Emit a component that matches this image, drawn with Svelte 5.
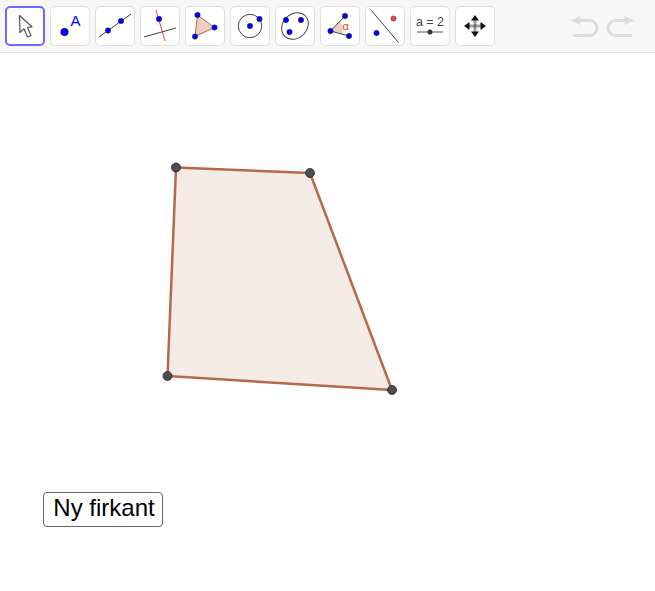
<script>
  const blue = '#0000ff';
</script>

<div class="applet">
  <div class="toolbar">
    <div class="tools">
      <button class="tool active" aria-label="Flytt">
        <svg viewBox="0 0 40 40"><path d="M14.5 9.5 L15 26.5 L19 22.8 L22.5 31 L26 29.5 L22.5 21.5 L27 20.8 Z" fill="#fff" stroke="#555" stroke-width="1.2" stroke-linejoin="round"/></svg>
      </button>
      <button class="tool" aria-label="Punkt">
        <svg viewBox="0 0 40 40"><circle cx="14.5" cy="26" r="3.8" fill={blue} stroke="#111" stroke-width=".6"/><text x="25.5" y="19.5" class="a">A</text></svg>
      </button>
      <button class="tool" aria-label="Linje">
        <svg viewBox="0 0 40 40"><path d="M4 31 L36 8" stroke="#444" stroke-width="1"/><circle cx="13" cy="24.5" r="2.7" class="p"/><circle cx="26" cy="15" r="2.7" class="p"/></svg>
      </button>
      <button class="tool" aria-label="Normal">
        <svg viewBox="0 0 40 40"><path d="M16 4 L25 35" stroke="#f04040" stroke-width="1"/><path d="M4 31 L36 22" stroke="#444" stroke-width="1"/><circle cx="19" cy="13" r="2.7" class="p"/></svg>
      </button>
      <button class="tool" aria-label="Mangekant">
        <svg viewBox="0 0 40 40"><path d="M12.5 9 L29.5 21.5 L10 30.5 Z" fill="#eccfc4" stroke="#b5694a" stroke-width="1"/><circle cx="12.5" cy="9" r="2.7" class="p"/><circle cx="29.5" cy="21.5" r="2.7" class="p"/><circle cx="10" cy="30.5" r="2.7" class="p"/></svg>
      </button>
      <button class="tool" aria-label="Sirkel">
        <svg viewBox="0 0 40 40"><circle cx="20" cy="20" r="11.7" fill="none" stroke="#444" stroke-width="1"/><circle cx="20" cy="20" r="2.7" class="p"/><circle cx="29.5" cy="13" r="2.7" class="p"/></svg>
      </button>
      <button class="tool" aria-label="Ellipse">
        <svg viewBox="0 0 40 40"><ellipse cx="20" cy="20" rx="14.5" ry="12" transform="rotate(-45 20 20)" fill="none" stroke="#444" stroke-width="1"/><circle cx="11" cy="14" r="2.7" class="p"/><circle cx="26" cy="14" r="2.7" class="p"/><circle cx="14.5" cy="26" r="2.7" class="p"/></svg>
      </button>
      <button class="tool" aria-label="Vinkel">
        <svg viewBox="0 0 40 40"><path d="M10.5 25 L19.5 15.7 A 13 13 0 0 1 23 28.4 Z" fill="#eccfc4"/><path d="M25 10 L10.5 25 L29 30" fill="none" stroke="#444" stroke-width="1"/><circle cx="25" cy="10" r="2.7" class="p"/><circle cx="10.5" cy="25" r="2.7" class="p"/><circle cx="29" cy="30" r="2.7" class="p"/><text x="22.5" y="23.5" class="alpha">α</text></svg>
      </button>
      <button class="tool" aria-label="Speiling">
        <svg viewBox="0 0 40 40"><path d="M6 4 L33.5 36.5" stroke="#444" stroke-width="1"/><circle cx="11.5" cy="27" r="2.7" class="p"/><circle cx="28.5" cy="12.5" r="2.6" fill="#f04040" stroke="#333" stroke-width=".5"/></svg>
      </button>
      <button class="tool" aria-label="Glider">
        <svg viewBox="0 0 40 40"><text x="20" y="19.5" class="slider">a = 2</text><path d="M7 26 H33" stroke="#555" stroke-width="1"/><circle cx="20" cy="26" r="2.5" fill="#333"/></svg>
      </button>
      <button class="tool" aria-label="Flytt tegneflate">
        <svg viewBox="0 0 40 40"><path d="M19.2 12 V28 M20.8 12 V28 M12 19.2 H28 M12 20.8 H28" stroke="#333" stroke-width=".7"/><path d="M20 9 L24 14.5 H16 Z M20 31 L24 25.5 H16 Z M9 20 L14.5 16 V24 Z M31 20 L25.5 16 V24 Z" fill="#111"/></svg>
      </button>
    </div>
    <div class="history">
      <svg class="hist" viewBox="0 0 30 24" aria-label="Angre"><path d="M0.5 4.5 L10.5 0 V9 Z" fill="#dcdcdc"/><path d="M9 4.5 H19.5 A 7.5 7.5 0 0 1 19.5 19.5 H3" fill="none" stroke="#dcdcdc" stroke-width="3"/></svg>
      <svg class="hist" viewBox="0 0 30 24" aria-label="Gjenta"><path d="M29.5 4.5 L19.5 0 V9 Z" fill="#dcdcdc"/><path d="M21 4.5 H10.5 A 7.5 7.5 0 0 0 10.5 19.5 H27" fill="none" stroke="#dcdcdc" stroke-width="3"/></svg>
    </div>
  </div>

  <div class="canvas">
    <svg class="drawing" viewBox="0 53 655 538" aria-label="Firkant">
      <polygon points="176,167.5 310,173 392,390 167.5,376" fill="#f4ebe6" stroke="#b5694a" stroke-width="2.5" stroke-linejoin="round"/>
      <circle cx="176" cy="167.5" r="4.5" class="v"/>
      <circle cx="310" cy="173" r="4.5" class="v"/>
      <circle cx="392" cy="390" r="4.5" class="v"/>
      <circle cx="167.5" cy="376" r="4.5" class="v"/>
    </svg>
    <button class="action">Ny firkant</button>
  </div>
</div>

<style>
  :global(body) {
    margin: 0;
    background: #fff;
  }
  .applet {
    width: 655px;
    height: 591px;
    display: flex;
    flex-direction: column;
    overflow: hidden;
    font-family: "Liberation Sans", Arial, sans-serif;
  }
  .toolbar {
    flex: none;
    box-sizing: border-box;
    background: #f7f7f7;
    border-bottom: 1px solid #e0e0e0;
    height: 53px;
    padding: 6px 20px 0 5px;
    display: flex;
    justify-content: space-between;
    align-items: flex-start;
  }
  .tools {
    display: flex;
    gap: 5px;
  }
  .tool {
    width: 40px;
    height: 40px;
    padding: 0;
    box-sizing: border-box;
    background: #fff;
    border: 1px solid #e0e0e0;
    border-radius: 5px;
    position: relative;
  }
  .tool svg {
    position: absolute;
    left: -1px;
    top: -1px;
    width: 40px;
    height: 40px;
    display: block;
  }
  .tool.active {
    border: 2px solid #6a6aff;
  }
  .tool.active svg {
    left: -2px;
    top: -2px;
  }
  .p {
    fill: #0000ff;
    stroke: #222;
    stroke-width: 0.5;
  }
  .a {
    font-size: 15px;
    fill: #0000ff;
    text-anchor: middle;
    font-family: "Liberation Sans", Arial, sans-serif;
  }
  .alpha {
    font-size: 11px;
    fill: #f04040;
    font-family: "Liberation Sans", Arial, sans-serif;
  }
  .slider {
    font-size: 12.5px;
    fill: #444;
    text-anchor: middle;
    font-family: "Liberation Sans", Arial, sans-serif;
  }
  .history {
    display: flex;
    gap: 5px;
    margin-top: 10px;
  }
  .hist {
    width: 30px;
    height: 24px;
    display: block;
  }
  .canvas {
    position: relative;
    flex: 1;
  }
  .drawing {
    display: block;
    width: 655px;
    height: 538px;
  }
  .v {
    fill: #4d4d4d;
    stroke: #2a2a2a;
    stroke-width: 0.8;
  }
  .action {
    position: absolute;
    left: 43px;
    top: 439px;
    width: 120px;
    height: 35px;
    padding: 0 0 3px 2px;
    box-sizing: border-box;
    background: #fff;
    border: 1.5px solid #666;
    border-radius: 4px;
    color: #000;
    font-family: "Liberation Sans", Arial, sans-serif;
    font-size: 24px;
    line-height: 1;
  }
</style>
